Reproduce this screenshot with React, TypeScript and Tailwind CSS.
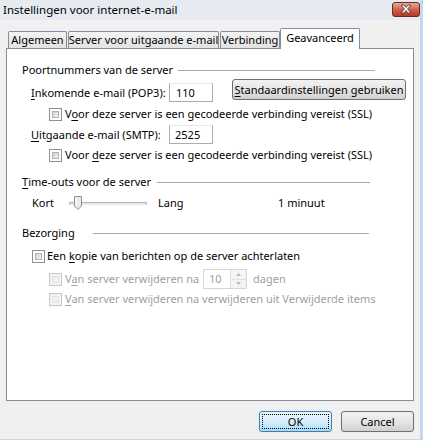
import React from "react";

const U = ({ children }: { children: React.ReactNode }) => (
  <span className="underline underline-offset-2">{children}</span>
);

function Checkbox({ disabled }: { disabled?: boolean }) {
  return (
    <div
      className={
        disabled
          ? "w-[13px] h-[13px] border border-[#c6c6c6] bg-[#f4f4f4] p-[2px] shrink-0"
          : "w-[13px] h-[13px] border border-[#8e8f8f] bg-white p-[2px] shrink-0"
      }
    >
      <div
        className={
          disabled
            ? "w-full h-full bg-[#f0f0f0] border border-[#e2e2e2]"
            : "w-full h-full bg-gradient-to-br from-[#cbcfd5] to-[#f6f6f6] border border-[#aeb3b9]"
        }
      />
    </div>
  );
}

function GroupHeader({ label, textW, lineW }: { label: React.ReactNode; textW: string; lineW: string }) {
  return (
    <div className="flex items-center h-[16px] pl-[15px]">
      <div className={textW + " shrink-0 whitespace-nowrap"}>{label}</div>
      <div className={lineW + " h-px bg-[#a9a9a9]"} />
    </div>
  );
}

function Tab({ label, selected, cls }: { label: string; selected?: boolean; cls: string }) {
  return selected ? (
    <div className={cls + " h-[21px] -mb-px bg-white border border-b-0 border-[#898c95] rounded-t-[2px] flex items-start justify-center pt-[1px] whitespace-nowrap"}>
      {label}
    </div>
  ) : (
    <div className={cls + " h-[17px] bg-gradient-to-b from-[#f3f3f3] to-[#e2e2e2] border border-b-0 border-[#898c95] rounded-t-[2px] flex items-center justify-center whitespace-nowrap"}>
      {label}
    </div>
  );
}

function WinButton({ children, cls, primary }: { children: React.ReactNode; cls: string; primary?: boolean }) {
  if (primary) {
    return (
      <div className={cls + " rounded-[3px] border border-[#3c7fb1] bg-gradient-to-b from-[#eaf6fd] via-[#d9f0fc] to-[#a7d9f5] p-[2px]"}>
        <div className="w-full h-full border border-dotted border-black flex items-center justify-center">
          {children}
        </div>
      </div>
    );
  }
  return (
    <div className={cls + " rounded-[3px] border border-[#707070] bg-gradient-to-b from-[#f2f2f2] via-[#e6e6e6] to-[#d0d0d0] flex items-center justify-center whitespace-nowrap"}>
      {children}
    </div>
  );
}

export default function App() {
  return (
    <div className="w-[423px] h-[440px] bg-[#f0f0f0] text-[11px] leading-[16px] text-black font-['Noto_Sans','Liberation_Sans',sans-serif] overflow-hidden flex flex-col whitespace-nowrap">
      <div className="flex h-[439px]">
        <div className="w-[420px] flex flex-col">
          {/* title bar */}
          <div className="h-[20px] flex items-center justify-between pl-[3px] bg-[#e6ebf1]">
            <span className="text-[11.5px]">Instellingen voor internet-e-mail</span>
            <div className="w-[28px] h-[15px] mt-[-2px] rounded-[3px] border border-[#6d2a21] bg-gradient-to-b from-[#e9a99b] via-[#d0604d] to-[#b3392a] flex items-center justify-center">
              <svg width="14" height="10" viewBox="0 0 14 10">
                <path d="M2 1 L5 1 L7 3.5 L9 1 L12 1 L8.6 5 L12 9 L9 9 L7 6.5 L5 9 L2 9 L5.4 5 Z" fill="#fff" stroke="#4a2a28" strokeWidth="0.8" />
              </svg>
            </div>
          </div>

          <div className="flex flex-col pl-[6px] pr-[6px]">
            {/* tabs */}
            <div className="flex items-end h-[20px] mt-[8px] relative z-10">
              <Tab label="Algemeen" cls="ml-[2px] w-[59px]" />
              <Tab label="Server voor uitgaande e-mail" cls="ml-px w-[151px]" />
              <Tab label="Verbinding" cls="ml-px w-[60px]" />
              <Tab label="Geavanceerd" selected cls="w-[80px]" />
            </div>

            {/* panel */}
            <div className="h-[353px] bg-white border border-[#898c95] flex flex-col pt-[13px]">
              <GroupHeader label="Poortnummers van de server" textW="w-[156px]" lineW="w-[197px]" />

              <div className="flex items-start h-[24px] mt-px">
                <div className="w-[162px] pl-[24px] h-[19px] mt-[4px] flex items-center">
                  <span><U>I</U>nkomende e-mail (POP3):</span>
                </div>
                <div className="w-[44px] h-[19px] mt-[4px] border border-[#abadb3] border-t-[#e3e9ef] px-[6px] flex items-center">110</div>
                <WinButton cls="ml-[19px] w-[174px] h-[21px]">
                  <span><U>S</U>tandaardinstellingen gebruiken</span>
                </WinButton>
              </div>

              <div className="flex items-center h-[16px] mt-[3px] pl-[42px] gap-[3px]">
                <Checkbox />
                <span>V<U>o</U>or deze server is een gecodeerde verbinding vereist (SSL)</span>
              </div>

              <div className="flex items-center h-[19px] mt-[3px]">
                <div className="w-[162px] pl-[24px]">
                  <U>U</U>itgaande e-mail (SMTP):
                </div>
                <div className="w-[44px] h-[19px] border border-[#abadb3] border-t-[#e3e9ef] px-[5px] flex items-center">2525</div>
              </div>

              <div className="flex items-center h-[16px] mt-[3px] pl-[42px] gap-[3px]">
                <Checkbox />
                <span>Voor <U>d</U>eze server is een gecodeerde verbinding vereist (SSL)</span>
              </div>

              <div className="mt-[11px]">
                <GroupHeader label={<span><U>T</U>ime-outs voor de server</span>} textW="w-[135px]" lineW="w-[213px]" />
              </div>

              <div className="flex items-center h-[16px] mt-[5px]">
                <div className="w-[62px] pl-[25px]">Kort</div>
                <div className="w-[78px] h-[16px] relative flex items-center">
                  <div className="w-full h-[3px] bg-[#e7eaea] border border-[#b0b5b9] border-b-[#e8e8e8]" />
                  <svg className="absolute left-[5px] top-[1px]" width="8" height="14" viewBox="0 0 8 14">
                    <path d="M0.5 0.5 H7.5 V10 L4 13.5 L0.5 10 Z" fill="#ececec" stroke="#8b9196" />
                    <path d="M2 2 V9.5" stroke="#fff" />
                  </svg>
                </div>
                <div className="w-[131px] pl-[11px]">Lang</div>
                <div>1 minuut</div>
              </div>

              <div className="mt-[14px]">
                <GroupHeader label="Bezorging" textW="w-[71px]" lineW="w-[276px]" />
              </div>

              <div className="flex items-center h-[16px] mt-[7px] pl-[25px] gap-[2px]">
                <Checkbox />
                <span>Een <U>k</U>opie van berichten op de server achterlaten</span>
              </div>

              <div className="flex items-center h-[20px] mt-[5px] pl-[42px] text-[#a0a0a0]">
                <Checkbox disabled />
                <span className="ml-[3px] w-[138px]">V<U>a</U>n server verwijderen na</span>
                <div className="w-[44px] h-[20px] border border-[#d5d5d5] flex items-center">
                  <span className="pl-[5px] flex-1">10</span>
                  <div className="w-[16px] h-full flex flex-col border-l border-[#e0e0e0]">
                    <div className="flex-1 flex items-center justify-center bg-[#f4f4f4] border-b border-[#e0e0e0]">
                      <svg width="5" height="3" viewBox="0 0 5 3"><path d="M0 3 L2.5 0 L5 3 Z" fill="#b9b9b9" /></svg>
                    </div>
                    <div className="flex-1 flex items-center justify-center bg-[#f4f4f4]">
                      <svg width="5" height="3" viewBox="0 0 5 3"><path d="M0 0 L2.5 3 L5 0 Z" fill="#b9b9b9" /></svg>
                    </div>
                  </div>
                </div>
                <span className="ml-[6px]">dagen</span>
              </div>

              <div className="flex items-center h-[16px] mt-[2px] pl-[42px] gap-[3px] text-[#a0a0a0]">
                <Checkbox disabled />
                <span><U>V</U>an server verwijderen na verwijderen uit Verwijderde items</span>
              </div>
            </div>

            {/* bottom buttons */}
            <div className="flex justify-end gap-[9px] mt-[10px]">
              <WinButton primary cls="w-[73px] h-[21px]">OK</WinButton>
              <WinButton cls="w-[73px] h-[21px]">Cancel</WinButton>
            </div>
          </div>
        </div>
        <div className="flex-1 bg-[#c3d8ea]" />
      </div>
      <div className="h-px bg-[#c3d8ea]" />
    </div>
  );
}
